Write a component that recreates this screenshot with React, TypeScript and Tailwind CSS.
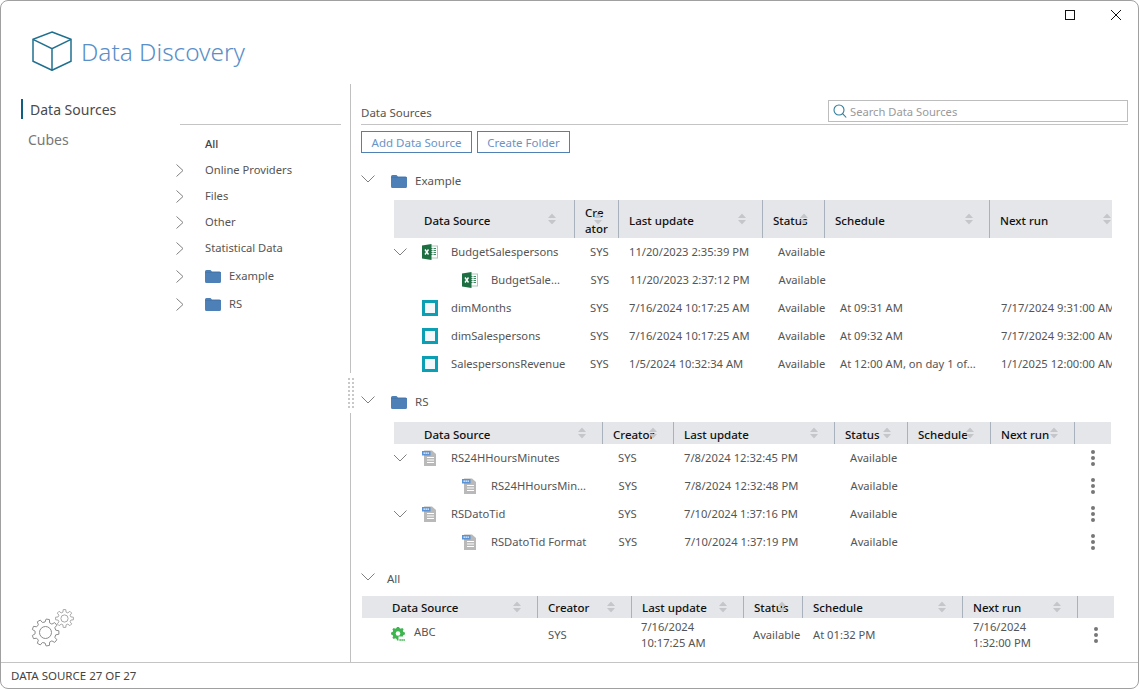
import { ReactNode } from 'react';

type Column = { label: string; w: string; sort?: string };
type Row = { name: string; icon: ReactNode; child?: boolean; open?: boolean; cells: string[]; tall?: boolean };

function ChevronDown({ className = '' }: { className?: string }) {
  return (
    <svg width="14" height="8" viewBox="0 0 14 8" fill="none" stroke="#808080" className={`shrink-0 ${className}`}>
      <path d="M0.5 0.5L7 7L13.5 0.5" />
    </svg>
  );
}

function ChevronRight() {
  return (
    <svg width="8" height="13" viewBox="0 0 8 13" fill="none" stroke="#808080" className="shrink-0">
      <path d="M0.5 0.5L7 6.5L0.5 12.5" />
    </svg>
  );
}

function Folder() {
  return (
    <svg width="16" height="14" viewBox="0 0 16 14" className="shrink-0">
      <path d="M0 2.5Q0 1 1.5 1H5.5L7 2.5H14.5Q16 2.5 16 4V12.5Q16 14 14.5 14H1.5Q0 14 0 12.5Z" fill="#4e80b8" />
      <path d="M0 3.5H16" stroke="#3f6fa5" strokeWidth="0.6" />
    </svg>
  );
}

function Excel() {
  return (
    <svg width="16" height="16" viewBox="0 0 16 16" className="shrink-0">
      <rect x="7" y="2" width="8.5" height="12" fill="#fff" stroke="#a9c9b6" />
      <path d="M9 4.5h1.5M11.5 4.5H14M9 6.5h1.5M11.5 6.5H14M9 8.5h1.5M11.5 8.5H14M9 10.5h1.5M11.5 10.5H14" stroke="#3c8a5e" strokeWidth="1" />
      <path d="M0 1.5L9.5 0V16L0 14.5Z" fill="#1d6f42" />
      <path d="M3 5.5L6.5 10.5M6.5 5.5L3 10.5" stroke="#fff" strokeWidth="1.4" />
    </svg>
  );
}

function TealSquare() {
  return <div className="w-4 h-4 shrink-0 border-[3px] border-[#0c9fb4] bg-[#f4f8fb]" />;
}

function CsvDoc() {
  return (
    <div className="w-4 shrink-0">
      <svg width="14" height="16" viewBox="0 0 14 16">
        <path d="M2 0.5H10L14 4V16H2Z" fill="#b9b9b9" />
        <path d="M5 7.5H12M5 10H12M5 12.5H12" stroke="#fff" strokeWidth="1" />
        <rect x="0" y="1" width="8.5" height="4.5" fill="#5b93d6" />
        <path d="M1.5 3.2H7" stroke="#fff" strokeWidth="1.2" strokeDasharray="1.4 0.6" />
      </svg>
    </div>
  );
}

function gearPath(cx: number, cy: number, inner: number, outer: number, teeth: number) {
  const parts: string[] = [];
  const step = (Math.PI * 2) / teeth;
  for (let i = 0; i < teeth; i++) {
    const a = i * step;
    const pts = [
      [inner, a - step * 0.32],
      [outer, a - step * 0.18],
      [outer, a + step * 0.18],
      [inner, a + step * 0.32],
    ];
    pts.forEach(([r, t], j) => {
      const x = (cx + r * Math.cos(t)).toFixed(2);
      const y = (cy + r * Math.sin(t)).toFixed(2);
      parts.push(`${i === 0 && j === 0 ? 'M' : 'L'}${x} ${y}`);
    });
  }
  return parts.join(' ') + ' Z';
}

function ApiGear() {
  return (
    <svg width="16" height="15" viewBox="0 0 16 15" className="shrink-0">
      <path d={gearPath(7, 6.5, 5.6, 7, 8)} fill="#3fb54f" />
      <circle cx="7" cy="6.5" r="2.3" fill="#fff" />
      <rect x="7.5" y="9.5" width="8" height="5" fill="#fff" />
      <path d="M8.5 13h1.2M10.5 13h1.2M12.5 13h1.2" stroke="#3fb54f" strokeWidth="2" />
    </svg>
  );
}

function SettingsGears() {
  return (
    <svg width="44" height="38" viewBox="0 0 44 38" fill="none" stroke="#8c8c8c" strokeWidth="1">
      <path d={gearPath(14.5, 23.5, 10.5, 13.5, 9)} />
      <circle cx="14.5" cy="23.5" r="6" />
      <path d={gearPath(33.5, 9.5, 6.5, 9, 8)} stroke="#a8a8a8" />
      <circle cx="33.5" cy="9.5" r="3.6" stroke="#a8a8a8" />
    </svg>
  );
}

function SortArrows({ className }: { className: string }) {
  return (
    <svg width="8" height="11" viewBox="0 0 8 11" className={`absolute top-1/2 -translate-y-1/2 ${className}`} fill="#c4c6ca">
      <path d="M4 0L8 4.5H0Z" />
      <path d="M4 11L8 6.5H0Z" />
    </svg>
  );
}

function Dots() {
  return (
    <div className="flex flex-col gap-[2px] items-center">
      <div className="w-[4px] h-[4px] rounded-full bg-[#777]" />
      <div className="w-[4px] h-[4px] rounded-full bg-[#777]" />
      <div className="w-[4px] h-[4px] rounded-full bg-[#777]" />
    </div>
  );
}

function DataTable({ columns, rows, headClass, cellPads, width, firstBodyPad, actions }: {
  columns: Column[];
  rows: Row[];
  headClass: string;
  cellPads: string[];
  width: string;
  firstBodyPad: string;
  actions?: string;
}) {
  return (
    <div className={`${width} overflow-hidden`}>
      <div className="flex bg-[#e4e6ea] w-max">
        {columns.map((c, i) => (
          <div
            key={c.label + i}
            className={`relative flex items-center ${headClass} ${c.w} ${i > 0 ? 'border-l border-[#a9b1bd] pl-[10px]' : 'pl-[30px]'} font-medium text-[#111] text-[11.5px] leading-[16px] whitespace-pre-line`}
          >
            {c.label}
            {c.label && <SortArrows className={c.sort ?? 'right-[16px]'} />}
          </div>
        ))}
      </div>
      {rows.map((r) => (
        <div key={r.name} className={`flex w-max items-center ${r.tall ? 'h-[33px]' : 'h-[28px]'}`}>
          <div className={`flex items-center ${columns[0].w} ${firstBodyPad} ${r.child ? 'pl-[68px]' : ''}`}>
            {r.open && <ChevronDown className="-ml-[1px] mr-[15px]" />}
            {!r.open && !r.child && <div className="w-[28px] shrink-0" />}
            {r.icon}
            <span className={`whitespace-nowrap ${r.tall ? 'ml-[7px] -mt-[5px]' : 'ml-[13px]'}`}>{r.name}</span>
          </div>
          {r.cells.map((cell, i) => (
            <div key={i} className={`${columns[i + 1].w} ${cellPads[i]} whitespace-pre-line leading-[16px] ${r.child ? 'translate-x-[0.5px]' : ''}`}>
              <span className="whitespace-pre-line">{cell}</span>
            </div>
          ))}
          {actions && <div className={`${actions} flex justify-center`}><Dots /></div>}
        </div>
      ))}
    </div>
  );
}

function Section({ label, folder, gapClass, children }: { label: string; folder?: boolean; gapClass: string; children: ReactNode }) {
  return (
    <section className={gapClass}>
      <div className="flex items-center h-[20px] text-[11.5px]">
        <ChevronDown className="mr-[16px] -translate-y-[2px]" />
        {folder && <Folder />}
        <span className={folder ? 'ml-[8px]' : '-ml-[4px]'}>{label}</span>
      </div>
      {children}
    </section>
  );
}

const columnsA: Column[] = [
  { label: 'Data Source', w: 'w-[180px]', sort: 'right-[18px]' },
  { label: 'Cre\nator', w: 'w-[44px]' },
  { label: 'Last update', w: 'w-[144px]' },
  { label: 'Status', w: 'w-[62px]' },
  { label: 'Schedule', w: 'w-[165px]' },
  { label: 'Next run', w: 'w-[138px]' },
];

const columnsB: Column[] = [
  { label: 'Data Source', w: 'w-[208px]' },
  { label: 'Creator', w: 'w-[71px]' },
  { label: 'Last update', w: 'w-[161px]' },
  { label: 'Status', w: 'w-[73px]' },
  { label: 'Schedule', w: 'w-[83px]' },
  { label: 'Next run', w: 'w-[84px]' },
  { label: '', w: 'w-[37px]' },
];

const columnsC: Column[] = [
  { label: 'Data Source', w: 'w-[175px]' },
  { label: 'Creator', w: 'w-[94px]' },
  { label: 'Last update', w: 'w-[112px]' },
  { label: 'Status', w: 'w-[59px]' },
  { label: 'Schedule', w: 'w-[160px]' },
  { label: 'Next run', w: 'w-[115px]' },
  { label: '', w: 'w-[37px]' },
];

const rowsA: Row[] = [
  { name: 'BudgetSalespersons', icon: <Excel />, open: true, cells: ['SYS', '11/20/2023 2:35:39 PM', 'Available', '', ''] },
  { name: 'BudgetSale...', icon: <Excel />, child: true, cells: ['SYS', '11/20/2023 2:37:12 PM', 'Available', '', ''] },
  { name: 'dimMonths', icon: <TealSquare />, cells: ['SYS', '7/16/2024 10:17:25 AM', 'Available', 'At 09:31 AM', '7/17/2024 9:31:00 AM'] },
  { name: 'dimSalespersons', icon: <TealSquare />, cells: ['SYS', '7/16/2024 10:17:25 AM', 'Available', 'At 09:32 AM', '7/17/2024 9:32:00 AM'] },
  { name: 'SalespersonsRevenue', icon: <TealSquare />, cells: ['SYS', '1/5/2024 10:32:34 AM', 'Available', 'At 12:00 AM, on day 1 of...', '1/1/2025 12:00:00 AM'] },
];

const rowsB: Row[] = [
  { name: 'RS24HHoursMinutes', icon: <CsvDoc />, open: true, cells: ['SYS', '7/8/2024 12:32:45 PM', 'Available', '', ''] },
  { name: 'RS24HHoursMin...', icon: <CsvDoc />, child: true, cells: ['SYS', '7/8/2024 12:32:48 PM', 'Available', '', ''] },
  { name: 'RSDatoTid', icon: <CsvDoc />, open: true, cells: ['SYS', '7/10/2024 1:37:16 PM', 'Available', '', ''] },
  { name: 'RSDatoTid Format', icon: <CsvDoc />, child: true, cells: ['SYS', '7/10/2024 1:37:19 PM', 'Available', '', ''] },
];

const rowsC: Row[] = [
  { name: 'ABC', icon: <ApiGear />, tall: true, cells: ['SYS', '7/16/2024\n10:17:25 AM', 'Available', 'At 01:32 PM', '7/16/2024\n1:32:00 PM'] },
];

const treeItems = ['Online Providers', 'Files', 'Other', 'Statistical Data'];
const gripDots = Array.from({ length: 16 }, (_, i) => i);

export default function App() {
  return (
    <div className="w-[1139px] h-[689px] flex flex-col bg-white border border-[#a0a0a0] rounded-lg overflow-hidden text-[11.2px] text-[#555] font-['Open_Sans',sans-serif]">
      <header className="h-[83px] flex justify-between shrink-0">
        <div className="flex items-center pl-[31px] pt-[19px] gap-[9px] h-[83px]">
          <svg width="40" height="40" viewBox="0 0 40 40" fill="none" stroke="#1f6f8f" strokeWidth="1.5" className="shrink-0 -translate-y-[1px]">
            <path d="M20 1L39 8.3V30.3L20 39.3L1 30.3V8.3Z" />
            <path d="M1 8.3L20 17.7L39 8.3M20 17.7V39.3" />
          </svg>
          <span className="text-[24.4px] font-light text-[#5a8fc8] leading-none">Data Discovery</span>
        </div>
        <div className="flex pt-[9px] pr-[17px] gap-[36px]">
          <div className="w-[10px] h-[10px] border border-[#111]" />
          <svg width="10" height="10" viewBox="0 0 10 10" stroke="#111" fill="none">
            <path d="M0 0L10 10M10 0L0 10" />
          </svg>
        </div>
      </header>

      <div className="flex-1 flex min-h-0">
        <aside className="w-[349px] shrink-0 flex">
          <nav className="w-[175px] shrink-0 flex flex-col pl-[20px] pt-[15px] pb-[15px]">
            <div className="h-[20px] border-l-2 border-[#0f5f80] pl-[7px] flex items-center text-[14px] text-[#4a4a4a]">Data Sources</div>
            <div className="h-[20px] mt-[10px] pl-[7px] flex items-center text-[14px] text-[#777]">Cubes</div>
            <div className="mt-auto pl-[10px]">
              <SettingsGears />
            </div>
          </nav>
          <div className="flex-1 pt-[40px]">
            <div className="ml-[4px] mr-[9px] border-t border-[#c4c4c4] mb-[6px]" />
            <div className="h-[26px] pl-[29px] flex items-center font-medium text-[#444]">All</div>
            {treeItems.map((t) => (
              <div key={t} className="h-[26px] flex items-center gap-[21px]">
                <ChevronRight />
                <span>{t}</span>
              </div>
            ))}
            <div className="h-[1px]" />
            {['Example', 'RS'].map((t) => (
              <div key={t} className="h-[28px] flex items-center gap-[21px]">
                <ChevronRight />
                <Folder />
                <span className="-ml-[13px]">{t}</span>
              </div>
            ))}
          </div>
        </aside>

        <div className="w-[6px] -mx-[2.5px] shrink-0 flex flex-col items-center">
          <div className="w-[1px] h-[289px] bg-[#c0c0c0]" />
          <div className="h-[40px] flex items-center">
            <div className="grid grid-cols-2 gap-[2px]">
              {gripDots.map((d) => (
                <div key={d} className="w-[2px] h-[2px] bg-[#c8c8c8]" />
              ))}
            </div>
          </div>
          <div className="w-[1px] flex-1 bg-[#c0c0c0]" />
        </div>

        <main className="flex-1 min-w-0 pl-[10px] pr-[10px] overflow-hidden">
          <div className="flex items-end justify-between mt-[16px] pb-[2px] border-b border-[#c4c4c4]">
            <span className="leading-[18px] text-[11.5px]">Data Sources</span>
            <div className="w-[300px] h-[22px] border border-[#bdbdbd] flex items-center pl-[4px] gap-[3px]">
              <svg width="14" height="14" viewBox="0 0 14 14" fill="none" stroke="#2f7c9c" strokeWidth="1.1" className="shrink-0">
                <circle cx="6" cy="6" r="5" />
                <path d="M9.6 9.6L13.2 13.5" />
              </svg>
              <span className="text-[#9a9a9a] pt-[2px]">Search Data Sources</span>
            </div>
          </div>

          <div className="flex gap-[5px] mt-[6px] text-[11.5px]">
            <button className="h-[22px] w-[111px] pt-[1px] border border-[#4f81b5] text-[#6b93c4]">Add Data Source</button>
            <button className="h-[22px] w-[93px] pt-[1px] border border-[#4f81b5] text-[#6b93c4]">Create Folder</button>
          </div>

          <Section label="Example" folder gapClass="mt-[18px]">
            <div className="mt-[9px] ml-[33px]">
              <DataTable
                columns={columnsA}
                rows={rowsA}
                width="w-[718px]"
                headClass="h-[38px] pt-[3px]"
                firstBodyPad=""
                cellPads={['pl-[16px]', 'pl-[11px]', 'pl-[16px]', 'pl-[16px]', 'pl-[12px]']}
              />
            </div>
          </Section>

          <Section label="RS" folder gapClass="mt-[14px]">
            <div className="mt-[10px] ml-[33px]">
              <DataTable
                columns={columnsB}
                rows={rowsB}
                width="w-[717px]"
                headClass="h-[22px] pt-[3px]"
                firstBodyPad=""
                cellPads={['pl-[16px]', 'pl-[11px]', 'pl-[16px]', 'pl-[16px]', 'pl-[12px]']}
                actions="w-[37px]"
              />
            </div>
          </Section>

          <Section label="All" gapClass="mt-[13px]">
            <div className="mt-[7px] ml-[1px]">
              <DataTable
                columns={columnsC}
                rows={rowsC}
                width="w-[752px]"
                headClass="h-[22px] pt-[2px]"
                firstBodyPad="pl-[1px]"
                cellPads={['pl-[11px]', 'pl-[10px]', 'pl-[10px]', 'pl-[11px]', 'pl-[11px]']}
                actions="w-[37px]"
              />
            </div>
          </Section>
        </main>
      </div>

      <footer className="h-[26px] shrink-0 border-t border-[#c4c4c4] flex items-center pl-[10px] text-[11.5px] text-[#444]">DATA SOURCE 27 OF 27</footer>
    </div>
  );
}
